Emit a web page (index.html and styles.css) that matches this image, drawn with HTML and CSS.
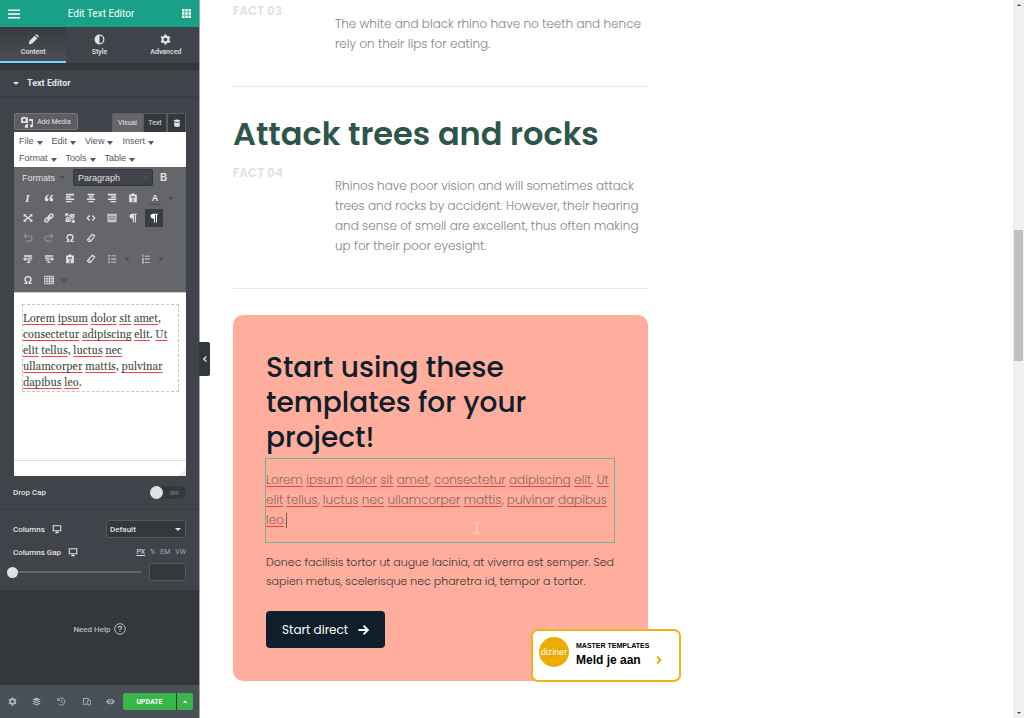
FILE: index.html
```
<!DOCTYPE html>
<html lang="en">
<head>
    <meta charset="UTF-8">
    <meta name="viewport" content="width=device-width, initial-scale=1.0">
    <title>Edit Text Editor</title>
    <link rel="stylesheet" href="styles.css">
</head>
<body>
    <svg class="sprite" aria-hidden="true">
        <symbol id="i-left" viewBox="0 0 12 12"><path d="M1 1h10v2H1zM1 4h6v1.6H1zM1 6.7h10v1.8H1zM1 9.6h7v1.6H1z"/></symbol>
        <symbol id="i-center" viewBox="0 0 12 12"><path d="M2 1h8v2H2zM3.5 4h5v1.6h-5zM1 6.7h10v1.8H1zM3 9.6h6v1.6H3z"/></symbol>
        <symbol id="i-right" viewBox="0 0 12 12"><path d="M1 1h10v2H1zM5 4h6v1.6H5zM1 6.7h10v1.8H1zM4 9.6h7v1.6H4z"/></symbol>
        <symbol id="i-quote" viewBox="0 0 12 12"><path d="M5.4 2C2.6 2.4 1 4.200 1 7.200 1 9 1.900 10 3.200 10s2.200-.9 2.200-2.200S4.500 5.600 3.400 5.600c.1-1 .8-1.700 2-2zM11 2C8.200 2.400 6.600 4.200 6.600 7.200c0 1.800.9 2.800 2.200 2.800S11 9.100 11 7.800 10.100 5.600 9 5.600c.1-1 .8-1.700 2-2z"/></symbol>
        <symbol id="i-paste" viewBox="0 0 12 12"><path fill-rule="evenodd" d="M4 1.800Q4.300.4 6 .4t2 1.400h2.600v9.400H1.400V1.800zM3.600 4v2h1V5.200h.8v4h-.8v1h2.800v-1h-.8v-4h.8V6h1V4z"/></symbol>
        <symbol id="i-full" viewBox="0 0 12 12"><path d="M.8 1.500h3.400L3.200 2.600 6 5l2.800-2.400-1-1.100h3.400v3.200L10 3.800 7.300 6 10 8.200l1.200-.9v3.200H7.800l1-1.100L6 7 3.200 9.400l1 1.100H.8V7.300l1.200.9L4.700 6 2 3.800l-1.200.9z"/></symbol>
        <symbol id="i-link" viewBox="0 0 12 12"><g fill="none" stroke="currentColor" stroke-width="1.600"><rect x="5.200" y="2" width="6" height="3.800" rx="1.900" transform="rotate(-45 8.200 3.900)"/><rect x=".8" y="6.200" width="6" height="3.800" rx="1.900" transform="rotate(-45 3.800 8.100)"/><path d="M4 8l4-4"/></g></symbol>
        <symbol id="i-unlink" viewBox="0 0 12 12"><g fill="none" stroke="currentColor" stroke-width="1.600"><path d="M5 4l2-2h3.500v3L8 7.500M7 8l-2 2H1.500V7L4 4.500M3 9l6-6M1 1.500l3 1.500M8 9l3 1.500M1 4V1h3M11 8v3H8"/></g></symbol>
        <symbol id="i-code" viewBox="0 0 12 12"><path fill="none" stroke="currentColor" stroke-width="1.500" d="M4.500 3L1.500 6l3 3M7.500 3l3 3-3 3"/></symbol>
        <symbol id="i-more" viewBox="0 0 12 12"><path fill-rule="evenodd" opacity=".8" d="M.5 1h11v10H.5zM1.500 4.200v.8h9v-.8zM1.500 7v.8h9V7zM4 2v1h.7V2zM7.500 2v1h.7V2zM4 5.500v1h.7v-1zM7.500 5.500v1h.7v-1z"/></symbol>
        <symbol id="i-para" viewBox="0 0 12 12"><path d="M5 .8h5.700v1.300H9.600v9.200H8.300V2.100H7.200v9.200H5.900V6.900C3.400 7 1.800 5.900 1.800 3.900 1.800 2 3.100.8 5 .8z"/></symbol>
        <symbol id="i-undo" viewBox="0 0 12 12"><path fill="none" stroke="currentColor" stroke-width="1.300" d="M3.800 1L1.300 3.500 3.800 6M1.500 3.500h6.200a3 3 0 0 1 0 6.200H3"/></symbol>
        <symbol id="i-redo" viewBox="0 0 12 12"><path fill="none" stroke="currentColor" stroke-width="1.300" d="M8.200 1l2.500 2.500L8.200 6M10.500 3.500H4.300a3 3 0 0 0 0 6.200H9"/></symbol>
        <symbol id="i-omega" viewBox="0 0 12 12"><path fill="none" stroke="currentColor" stroke-width="1.700" d="M1.500 10h3V8.600C1 6 2 2 6 2s5 4 1.500 6.600V10h3"/></symbol>
        <symbol id="i-eraser" viewBox="0 0 12 12"><path fill="none" stroke="currentColor" stroke-width="1.400" d="M7.500 1.500L10.500 3.500 5.500 10.200H3.300L1.700 8.200zM2.800 6.800l3.300 2.600"/></symbol>
        <symbol id="i-outdent" viewBox="0 0 12 12"><path d="M1 1.500h10v1.800H1zM5.500 4.200H11v1.500H5.500zM5.500 6.600H10v1.500H5.500zM5 9h3.500v1.700H5zM0 6l3-2.500v1.700h2v1.700H3v1.700z"/></symbol>
        <symbol id="i-indent" viewBox="0 0 12 12"><path d="M1 1.500h10v1.800H1zM1 4.200h5.500v1.500H1zM2 6.600h4.500v1.500H2zM4 9h3.500v1.700H4zM12 6L9 3.500v1.700H7v1.700h2v1.700z"/></symbol>
        <symbol id="i-ul" viewBox="0 0 12 12"><path d="M1.500 1.500h2v1.500h-2zM5 1.700h6v1H5zM1.500 5.200h2v1.500h-2zM5 5.500h6v1H5zM1.500 9h2v1.500h-2zM5 9.300h6v1H5z"/></symbol>
        <symbol id="i-ol" viewBox="0 0 12 12"><path d="M1.500 1h1.300v3H2V2h-.5zM4.500 2h6v1h-6zM1.500 5h1.700v3H1.500zM4.500 5.500h6v1h-6zM1.500 9h1.700v2.500H1.500zM4.500 9.500h6v1h-6z"/></symbol>
        <symbol id="i-table" viewBox="0 0 12 12"><path fill="none" stroke="currentColor" d="M.5 1.500h11v9H.5zM.5 4.500h11M.5 7.500h11M3.500 1.500v9M6.500 1.500v9M9.500 1.500v9"/></symbol>
        <symbol id="i-gear" viewBox="0 0 12 12"><path fill-rule="evenodd" d="M4.900.5h2.200l.4 1.500 1.200.7 1.500-.5 1.100 1.900-1.100 1.100v1.600l1.100 1.100-1.100 1.900-1.500-.5-1.200.7-.4 1.500H4.900L4.500 10l-1.200-.7-1.500.5L.7 7.900l1.100-1.100V5.200L.7 4.100l1.100-1.900 1.500.5L4.500 2zM6 4a2 2 0 1 0 0 4 2 2 0 0 0 0-4z"/></symbol>
        <symbol id="i-monitor" viewBox="0 0 12 12"><path fill="none" stroke="currentColor" stroke-width="1.300" d="M1.500 2h9v6h-9zM4 10.300h4M6 8v2"/></symbol>
    </svg>

    <div class="editor">
        <aside class="panel">
            <header class="panel-header">
                <button class="plain" aria-label="Menu"><svg class="icon" viewBox="0 0 12 12"><path d="M0 1.500h12v1.600H0zM0 5.200h12v1.600H0zM0 8.900h12v1.600H0z"/></svg></button>
                <h1>Edit Text Editor</h1>
                <button class="plain" aria-label="Widgets"><svg class="icon-s" viewBox="0 0 11 11"><path d="M0 0h3v3H0zM4 0h3v3H4zM8 0h3v3H8zM0 4h3v3H0zM4 4h3v3H4zM8 4h3v3H8zM0 8h3v3H0zM4 8h3v3H4zM8 8h3v3H8z"/></svg></button>
            </header>

            <nav class="tabs">
                <button class="tab active"><svg class="icon" viewBox="0 0 12 12"><path d="M.8 11.200l.7-3.600L7.200 1.900l2.900 2.900-5.700 5.700zM7.900 1.200l.7-.7q.6-.4 1.100 0l1.800 1.800q.4.5 0 1.100l-.7.7z"/></svg>Content</button>
                <button class="tab"><svg class="icon" viewBox="0 0 12 12"><path fill-rule="evenodd" d="M6 .6a5.400 5.400 0 1 0 0 10.800A5.400 5.400 0 0 0 6 .6zM6 2v8a4 4 0 0 0 0-8z"/></svg>Style</button>
                <button class="tab"><svg class="icon"><use href="#i-gear"/></svg>Advanced</button>
            </nav>

            <section class="controls">
                <button class="section-title"><span class="caret"></span>Text Editor</button>

                <div class="wysiwyg">
                    <div class="wysiwyg-top">
                        <button class="add-media"><svg class="icon" viewBox="0 0 12 12"><path fill-rule="evenodd" d="M0 1.500h1.500L2 .7h2l.5.800H7V7H0zM3.300 2.600a1.500 1.500 0 1 0 0 3 1.500 1.500 0 0 0 0-3zM8 3h4v7a1.500 1.500 0 1 1-1.300-1.500V5H8zM5.300 8h1.700v2.400A1.600 1.600 0 1 1 5.300 8.800z"/></svg>Add Media</button>
                        <div class="modes">
                            <button class="mode active">Visual</button>
                            <button class="mode">Text</button>
                            <button class="mode dark" aria-label="Dynamic tags"><svg class="icon-xs" viewBox="0 0 10 10"><path d="M1 1.500Q5-.5 9 1.500v1.300Q5 4.500 1 2.800zM1.500 4Q5 5.200 8.500 4v5Q5 10.800 1.500 9z"/></svg></button>
                        </div>
                    </div>
                    <div class="menubar">
                        <button>File<i></i></button><button>Edit<i></i></button><button>View<i></i></button><button>Insert<i></i></button>
                        <button>Format<i></i></button><button>Tools<i></i></button><button>Table<i></i></button>
                    </div>
                    <div class="toolbar">
                        <div class="tools">
                            <button class="formats">Formats<i></i></button>
                            <span class="select format-select"><select aria-label="Block format"><option>Paragraph</option></select><i></i></span>
                            <button class="tool bold">B</button>
                        </div>
                        <div class="tools">
                            <button class="tool italic">I</button>
                            <button class="tool" aria-label="Quote"><svg><use href="#i-quote"/></svg></button>
                            <button class="tool" aria-label="Align left"><svg><use href="#i-left"/></svg></button>
                            <button class="tool" aria-label="Align center"><svg><use href="#i-center"/></svg></button>
                            <button class="tool" aria-label="Align right"><svg><use href="#i-right"/></svg></button>
                            <button class="tool" aria-label="Paste as text"><svg><use href="#i-paste"/></svg></button>
                            <button class="tool split"><span class="color">A</span><i></i></button>
                        </div>
                        <div class="tools">
                            <button class="tool" aria-label="Fullscreen"><svg><use href="#i-full"/></svg></button>
                            <button class="tool" aria-label="Link"><svg><use href="#i-link"/></svg></button>
                            <button class="tool" aria-label="Unlink"><svg><use href="#i-unlink"/></svg></button>
                            <button class="tool" aria-label="Code"><svg><use href="#i-code"/></svg></button>
                            <button class="tool" aria-label="Toolbar toggle"><svg><use href="#i-more"/></svg></button>
                            <button class="tool" aria-label="Left to right"><svg><use href="#i-para"/></svg></button>
                            <button class="tool pressed" aria-label="Show blocks"><svg><use href="#i-para"/></svg></button>
                        </div>
                        <div class="tools">
                            <button class="tool" disabled aria-label="Undo"><svg><use href="#i-undo"/></svg></button>
                            <button class="tool" disabled aria-label="Redo"><svg><use href="#i-redo"/></svg></button>
                            <button class="tool" aria-label="Special character"><svg><use href="#i-omega"/></svg></button>
                            <button class="tool" aria-label="Clear formatting"><svg><use href="#i-eraser"/></svg></button>
                        </div>
                        <div class="tools second">
                            <button class="tool" aria-label="Outdent"><svg><use href="#i-outdent"/></svg></button>
                            <button class="tool" aria-label="Indent"><svg><use href="#i-indent"/></svg></button>
                            <button class="tool" aria-label="Paste"><svg><use href="#i-paste"/></svg></button>
                            <button class="tool" aria-label="Clear"><svg><use href="#i-eraser"/></svg></button>
                            <button class="tool split" aria-label="Bullet list"><svg><use href="#i-ul"/></svg><i></i></button>
                            <button class="tool split" aria-label="Numbered list"><svg><use href="#i-ol"/></svg><i></i></button>
                        </div>
                        <div class="tools">
                            <button class="tool" aria-label="Symbols"><svg><use href="#i-omega"/></svg></button>
                            <button class="tool split" aria-label="Table"><svg><use href="#i-table"/></svg><i></i></button>
                        </div>
                    </div>
                    <div class="edit-area">
                        <p class="block"><span>Lorem</span> <span>ipsum</span> <span>dolor</span> <span>sit</span> <span>amet</span>,<br><span>consectetur</span> <span>adipiscing</span> <span>elit</span>. <span>Ut</span><br><span>elit</span> <span>tellus</span>, <span>luctus</span> <span>nec</span><br><span>ullamcorper</span> <span>mattis</span>, <span>pulvinar</span><br><span>dapibus</span> <span>leo</span>.</p>
                    </div>
                    <div class="statusbar"><svg viewBox="0 0 8 8"><path d="M8 0v8H0z"/></svg></div>
                </div>

                <div class="control drop-cap">
                    <label for="dropCap">Drop Cap</label>
                    <span class="switch"><input type="checkbox" id="dropCap"><span>OFF</span></span>
                </div>
                <div class="control columns">
                    <label for="columns">Columns</label>
                    <svg class="device"><use href="#i-monitor"/></svg>
                    <span class="select columns-select"><select id="columns"><option>Default</option></select><i></i></span>
                </div>
                <div class="control gap-title">
                    <label for="gap">Columns Gap</label>
                    <svg class="device"><use href="#i-monitor"/></svg>
                    <div class="units"><button class="active">PX</button><button>%</button><button>EM</button><button>VW</button></div>
                </div>
                <div class="control gap-row">
                    <input type="range" id="gap" min="0" max="100" value="0">
                    <input type="text" class="gap-value" aria-label="Columns gap value">
                </div>
            </section>

            <div class="help">
                <a href="#">Need Help <svg viewBox="0 0 12 12"><circle cx="6" cy="6" r="5.300" fill="none" stroke="currentColor"/><path fill="none" stroke="currentColor" stroke-width="1.200" d="M4.300 4.900Q4.400 3.300 6 3.300t1.700 1.300Q7.700 5.500 6 6.300V7.200M6 8v1.200"/></svg></a>
            </div>

            <footer class="panel-footer">
                <button class="foot" aria-label="Settings"><svg><use href="#i-gear"/></svg></button>
                <button class="foot" aria-label="Navigator"><svg viewBox="0 0 12 12"><path d="M6 .8l5.500 2.400L6 5.600.5 3.200zM1.800 5L6 6.800 10.200 5l1.300.8L6 8.300.5 5.800zM1.800 7.800L6 9.600l4.200-1.800 1.300.8L6 11.200.5 8.600z"/></svg></button>
                <button class="foot" aria-label="History"><svg viewBox="0 0 12 12"><path fill="none" stroke="currentColor" stroke-width="1.200" d="M1 1.500v3h3M1.400 4.300A4.700 4.700 0 1 1 2.400 9.300M6 3.500v3l2 1.200"/></svg></button>
                <button class="foot" aria-label="Responsive"><svg viewBox="0 0 12 12"><path fill="none" stroke="currentColor" stroke-width="1.200" d="M6.500 9.500H.5M2 8V2h7v1.500M7.500 4.500h4v6h-4z"/></svg></button>
                <button class="foot" aria-label="Preview"><svg viewBox="0 0 12 12"><path fill-rule="evenodd" d="M0 6Q2.300 2.200 6 2.200T12 6Q9.700 9.800 6 9.800T0 6zM6 3.300a2.700 2.700 0 1 0 0 5.400 2.700 2.700 0 0 0 0-5.400zM6 4.600a1.400 1.400 0 1 1 0 2.800 1.400 1.400 0 0 1 0-2.800z"/></svg></button>
                <button class="update">UPDATE</button>
                <button class="update-more" aria-label="Save options"><i></i></button>
            </footer>

            <button class="collapse" aria-label="Hide panel"><svg viewBox="0 0 6 8"><path fill="none" stroke="currentColor" stroke-width="1.400" d="M4.500 1.500L1.800 4l2.700 2.500"/></svg></button>
        </aside>

        <main class="preview">
            <div class="content">
                <article class="fact">
                    <h3>FACT 03</h3>
                    <p>The white and black rhino have no teeth and hence<br>rely on their lips for eating.</p>
                </article>
                <h2>Attack trees and rocks</h2>
                <article class="fact">
                    <h3>FACT 04</h3>
                    <p>Rhinos have poor vision and will sometimes attack<br>trees and rocks by accident. However, their hearing<br>and sense of smell are excellent, thus often making<br>up for their poor eyesight.</p>
                </article>

                <section class="cta">
                    <h2>Start using these<br>templates for your<br>project!</h2>
                    <div class="editing">
                        <p><span>Lorem</span> <span>ipsum</span> <span>dolor</span> <span>sit</span> <span>amet</span>, <span>consectetur</span> <span>adipiscing</span> <span>elit</span>. <span>Ut</span><br><span>elit</span> <span>tellus</span>, <span>luctus</span> <span>nec</span> <span>ullamcorper</span> <span>mattis</span>, <span>pulvinar</span> <span>dapibus</span><br><span>leo</span>.<b class="text-caret"></b></p>
                        <svg class="pointer" viewBox="0 0 6 12"><path fill="none" stroke="currentColor" d="M.5.500H2L3 1.500 4 .5h1.500M3 1.500v9M.5 11.500H2l1-1 1 1h1.500"/></svg>
                    </div>
                    <p class="note">Donec facilisis tortor ut augue lacinia, at viverra est semper. Sed<br>sapien metus, scelerisque nec pharetra id, tempor a tortor.</p>
                    <a class="start" href="#">Start direct <svg viewBox="0 0 12 12"><path fill="none" stroke="currentColor" stroke-width="2" d="M.5 6h10M6 1.200L10.800 6 6 10.800"/></svg></a>

                    <a class="promo" href="#">
                        <span class="logo">diziner</span>
                        <span class="promo-text"><small>MASTER TEMPLATES</small><strong>Meld je aan <svg viewBox="0 0 6 10"><path fill="none" stroke="currentColor" stroke-width="2" d="M1 1.500L4.500 5 1 8.500"/></svg></strong></span>
                    </a>
                </section>
            </div>
        </main>

        <div class="scrollbar" aria-hidden="true">
            <i class="up"></i>
            <div class="track"><div class="thumb"></div></div>
            <i class="down"></i>
        </div>
    </div>
</body>
</html>
```
FILE: styles.css
```
* {
    box-sizing: border-box;
}

body {
    margin: 0;
    height: 100vh;
    overflow: hidden;
    background-color: #fff;
    font-family: Roboto, "Liberation Sans", sans-serif;
    font-size: 9px;
}

h1, h2, h3, p {
    margin: 0;
}

button, input, select {
    font: inherit;
    color: inherit;
    margin: 0;
}

button {
    padding: 0;
    border: none;
    background: none;
    cursor: pointer;
}

a {
    color: inherit;
    text-decoration: none;
}

svg {
    display: block;
    fill: currentColor;
    flex: none;
}

i {
    display: block;
    flex: none;
    border: 3px solid transparent;
    border-top: 4px solid currentColor;
    border-bottom: none;
}

.sprite {
    position: absolute;
    width: 0;
    height: 0;
}

.icon {
    width: 12px;
    height: 12px;
}

.icon-s {
    width: 9px;
    height: 9px;
}

.icon-xs {
    width: 8px;
    height: 8px;
}

.editor {
    display: flex;
    height: 100vh;
}

/* Panel */
.panel {
    position: relative;
    z-index: 2;
    flex: 0 0 200px;
    display: flex;
    flex-direction: column;
    background-color: #34373c;
    color: #e0e1e3;
    border-right: 1px solid #a4a6a8;
}

.panel-header {
    display: flex;
    align-items: center;
    justify-content: space-between;
    height: 27px;
    padding: 0 8px;
    background-color: #18a187;
    color: #fff;
}

.panel-header h1 {
    font-size: 10px;
    font-weight: 400;
}

.tabs {
    display: grid;
    grid-template-columns: repeat(3, 1fr);
    height: 36px;
    margin-bottom: 7px;
    background-color: #404349;
}

.tab {
    display: flex;
    flex-direction: column;
    align-items: center;
    gap: 3px;
    padding-top: 7px;
    font-size: 7px;
    font-weight: 500;
    border-bottom: 2px solid transparent;
}

.tab .icon {
    width: 11px;
    height: 11px;
}

.tab.active {
    background-image: linear-gradient(#383b40, #4b4e56);
    border-bottom-color: #71d7f7;
}

.controls {
    padding-bottom: 1px;
    background-color: #404349;
}

.section-title {
    display: flex;
    align-items: center;
    gap: 8px;
    width: 100%;
    height: 27px;
    padding-left: 13px;
    font-weight: 700;
    border-bottom: 1px solid #393c41;
}

.caret {
    border: 3px solid transparent;
    border-top-color: currentColor;
    border-bottom: none;
}

/* Text editor control */
.wysiwyg {
    margin: 16px 13px 0 14px;
}

.wysiwyg-top {
    display: flex;
    justify-content: space-between;
    height: 19px;
}

.add-media {
    display: flex;
    align-items: center;
    justify-content: center;
    gap: 4px;
    width: 64px;
    height: 17px;
    font-size: 7px;
    background-color: #5b5d62;
    border: 1px solid #74767a;
    border-radius: 2px;
}

.modes {
    display: flex;
}

.mode {
    display: flex;
    align-items: center;
    justify-content: center;
    width: 24px;
    font-size: 7px;
    background-color: #34373c;
    border: 1px solid #5b5d62;
    border-bottom: none;
}

.mode.active {
    width: 31px;
    background-color: #64666a;
}

.mode.dark {
    width: 19px;
}

.menubar {
    display: flex;
    flex-wrap: wrap;
    align-content: flex-start;
    column-gap: 9px;
    height: 35px;
    padding-left: 5px;
    background-color: #fff;
    color: #55585c;
    font-family: "Liberation Sans", Arial, sans-serif;
}

.menubar button {
    display: flex;
    align-items: center;
    gap: 3px;
    height: 17px;
}

.menubar i {
    margin-top: 4px;
}

.toolbar {
    height: 125px;
    padding-left: 3px;
    background-color: #64666a;
    font-family: "Liberation Sans", Arial, sans-serif;
}

.toolbar i {
    border-top-width: 3px;
    border-top-color: #4b4f54;
}

.tools {
    display: flex;
    align-items: center;
    height: 20px;
}

.tools:first-child {
    height: 21px;
}

.tools.second {
    height: 22px;
}

.tool {
    display: flex;
    align-items: center;
    justify-content: center;
    width: 21px;
    height: 18px;
}

.tool svg {
    width: 10px;
    height: 10px;
}

.tool:disabled {
    color: #929497;
}

.tool.pressed {
    width: 18px;
    margin-left: 2px;
    color: #fff;
    background-color: #393c42;
}

.tool.split {
    justify-content: flex-start;
    width: 34px;
    padding-left: 6px;
    gap: 7px;
}

.bold {
    font-weight: 700;
    font-size: 10px;
}

.italic {
    font: italic 700 11px "Liberation Serif", serif;
}

.color {
    width: 12px;
    font-weight: 700;
    line-height: 12px;
    border-bottom: 1px solid #484c50;
}

.formats {
    display: flex;
    align-items: center;
    gap: 4px;
    width: 56px;
    padding-left: 5px;
}

.select {
    position: relative;
    display: block;
    border: 1px solid #55585d;
    border-radius: 2px;
    background-color: #34373c;
}

.select select {
    appearance: none;
    display: block;
    width: 100%;
    height: 100%;
    padding: 0 3px;
    border: none;
    background: none;
}

/* arrow over the native select */
.select i {
    position: absolute;
    right: 4px;
    top: 50%;
    border-top-width: 3px;
    margin-top: -1px;
    pointer-events: none;
}

.format-select {
    width: 80px;
    height: 17px;
    background-color: #404349;
    border-color: #34373c;
}

.format-select select {
    padding: 0 4px;
}

.edit-area {
    min-height: 168px;
    padding: 11px 7px 0 8px;
    background-color: #fff;
    border-top: 1px solid #c9cacb;
}

.block {
    padding: 6px 0 0;
    border: 1px dashed #c8c8c8;
    color: #444;
    font: 11px/16px Georgia, Gelasio, "Liberation Serif", serif;
}

.block span, .editing span {
    text-decoration-line: underline;
    text-decoration-color: #ff3b3b;
    text-decoration-thickness: 1px;
    text-decoration-skip-ink: none;
    text-underline-offset: 2px;
}

.statusbar {
    display: flex;
    justify-content: flex-end;
    align-items: flex-end;
    height: 16px;
    background-color: #fff;
    border-top: 1px solid #ddd;
    color: #eee;
}

.statusbar svg {
    width: 8px;
    height: 8px;
}

/* Plain controls */
.control {
    display: flex;
    align-items: center;
    padding: 0 13px;
    font-size: 8px;
    font-weight: 500;
}

.drop-cap {
    justify-content: space-between;
    height: 34px;
    border-bottom: 1px solid #383b40;
}

.switch {
    display: flex;
    align-items: center;
    justify-content: space-between;
    width: 36px;
    height: 13px;
    padding-right: 7px;
    border-radius: 7px;
    background-color: #34373c;
    color: #85888c;
    font-size: 5px;
}

.switch input {
    appearance: none;
    width: 13px;
    height: 13px;
    border-radius: 50%;
    background-color: #e0e1e3;
}

.columns {
    height: 35px;
    padding-top: 3px;
}

.device {
    width: 10px;
    height: 10px;
    margin-left: 7px;
}

.columns-select {
    width: 80px;
    height: 18px;
    margin-left: auto;
}

.gap-title {
    height: 14px;
}

.units {
    display: flex;
    gap: 5px;
    margin-left: auto;
    font-size: 7px;
    font-weight: 400;
    color: #a4a7ab;
}

.units .active {
    color: #e0e1e3;
    text-decoration: underline;
}

.gap-row {
    height: 30px;
    padding-left: 7px;
    padding-bottom: 6px;
    padding-top: 2px;
}

.gap-row input[type="range"] {
    appearance: none;
    flex: 1;
    min-width: 0;
    height: 12px;
    margin-right: 8px;
    background: linear-gradient(#64666a, #64666a) center / 100% 2px no-repeat;
}

.gap-row input[type="range"]::-webkit-slider-thumb {
    appearance: none;
    width: 11px;
    height: 11px;
    border-radius: 50%;
    background-color: #e0e1e3;
}

.gap-value {
    width: 37px;
    height: 18px;
    background-color: #34373c;
    border: 1px solid #55585d;
    border-radius: 2px;
}

.help {
    flex: 1;
    padding-top: 33px;
    color: #b8babd;
    font-size: 8px;
    font-weight: 500;
}

.help a {
    display: flex;
    align-items: center;
    justify-content: center;
    gap: 3px;
}

.help svg {
    width: 12px;
    height: 12px;
}

.panel-footer {
    display: flex;
    align-items: center;
    height: 33px;
    padding-right: 6px;
    background-color: #495157;
    color: #a9b4bc;
}

.foot {
    flex: 1;
}

.foot svg {
    width: 9px;
    height: 9px;
    margin: 0 auto;
}

.update, .update-more {
    height: 17px;
    background-color: #39b54a;
    color: #fff;
    font-size: 7px;
    font-weight: 700;
}

.update {
    width: 53px;
    border-radius: 2px 0 0 2px;
}

.update-more {
    display: flex;
    align-items: center;
    justify-content: center;
    width: 17px;
    border-left: 1px solid #34373c;
    border-radius: 0 2px 2px 0;
}

.update-more i {
    border-width: 0 2px 3px;
    border-style: solid;
    border-color: transparent transparent #fff;
}

/* handle on the panel's edge */
.collapse {
    position: absolute;
    left: 199px;
    top: 342px;
    display: flex;
    align-items: center;
    justify-content: center;
    width: 11px;
    height: 34px;
    background-color: #34373c;
    border-radius: 0 2px 2px 0;
}

.collapse svg {
    width: 6px;
    height: 8px;
}

/* Page preview */
.preview {
    flex: 1;
    min-width: 0;
    padding: 0 33px;
    font-family: Poppins, Inter, sans-serif;
}

.content {
    max-width: 415px;
}

.fact {
    display: grid;
    grid-template-columns: 102px 1fr;
    padding-bottom: 32px;
    border-bottom: 1px solid #e8e8e8;
}

.fact h3 {
    color: #dfdfdf;
    font-size: 12px;
    font-weight: 600;
    line-height: 22px;
}

.fact p {
    padding-top: 14px;
    color: #858585;
    font-size: 12px;
    font-weight: 300;
    line-height: 20px;
    white-space: nowrap;
}

.content > h2 {
    padding-top: 27px;
    color: #2d5549;
    font-size: 32px;
    font-weight: 600;
    line-height: 40px;
    margin-bottom: 8px;
}

.cta {
    position: relative;
    margin-top: 26px;
    padding: 35px 33px 33px;
    background-color: #ffad9c;
    border-radius: 10px;
    color: #0f1e2b;
}

.cta h2 {
    font-size: 28px;
    font-weight: 500;
    line-height: 35px;
}

.editing {
    position: relative;
    margin: 3px 0 0 -1px;
    padding: 11px 0 12px;
    border: 1px solid #6fb5a0;
    color: #8f6660;
    font-size: 12px;
    font-weight: 300;
    line-height: 20px;
    white-space: nowrap;
}

.text-caret {
    display: inline-block;
    width: 1px;
    height: 15px;
    vertical-align: middle;
    background-color: #7a5a56;
}

.pointer {
    position: absolute;
    left: 208px;
    top: 63px;
    width: 6px;
    height: 12px;
    color: #ffe0d8;
}

.note {
    margin-top: 10px;
    color: #3c3436;
    font-size: 11px;
    font-weight: 300;
    line-height: 19px;
    white-space: nowrap;
}

.start {
    display: inline-flex;
    align-items: center;
    gap: 10px;
    height: 37px;
    margin-top: 20px;
    padding: 0 16px;
    background-color: #0f1e2b;
    border-radius: 4px;
    color: #fff;
    font-size: 12px;
    vertical-align: top;
}

.start svg {
    width: 11px;
    height: 12px;
}

/* floating badge over the card's corner */
.promo {
    position: absolute;
    right: -33px;
    bottom: -1px;
    display: flex;
    gap: 7px;
    width: 150px;
    height: 53px;
    padding: 6px;
    background-color: #fff;
    border: 2px solid #efb41c;
    border-radius: 7px;
    color: #000;
    font-family: "Liberation Sans", Arial, sans-serif;
}

.logo {
    display: flex;
    align-items: center;
    justify-content: center;
    width: 30px;
    height: 30px;
    border-radius: 50%;
    background-color: #ecac00;
    color: #fff;
    font-size: 9px;
}

.promo-text {
    padding-top: 4px;
}

.promo small {
    display: block;
    font-size: 7px;
    font-weight: 700;
    line-height: 9px;
}

.promo strong {
    display: flex;
    align-items: center;
    gap: 15px;
    font-size: 12px;
    line-height: 20px;
}

.promo svg {
    width: 6px;
    height: 10px;
    color: #ecac00;
}

/* Scrollbar */
.scrollbar {
    flex: 0 0 11px;
    display: flex;
    flex-direction: column;
    align-items: center;
    padding: 4px 1px;
    background-color: #f0f0f0;
}

.scrollbar .up, .scrollbar .down {
    border: 2px solid transparent;
    border-top: none;
    border-bottom: 2px solid #444;
}

.scrollbar .down {
    border-bottom: none;
    border-top: 2px solid #444;
}

.track {
    flex: 1;
    width: 100%;
    display: flex;
    flex-direction: column;
}

.track::before {
    content: "";
    flex: 224;
}

.track::after {
    content: "";
    flex: 351;
}

.thumb {
    flex: 131;
    background-color: #c1c1c1;
}
```
